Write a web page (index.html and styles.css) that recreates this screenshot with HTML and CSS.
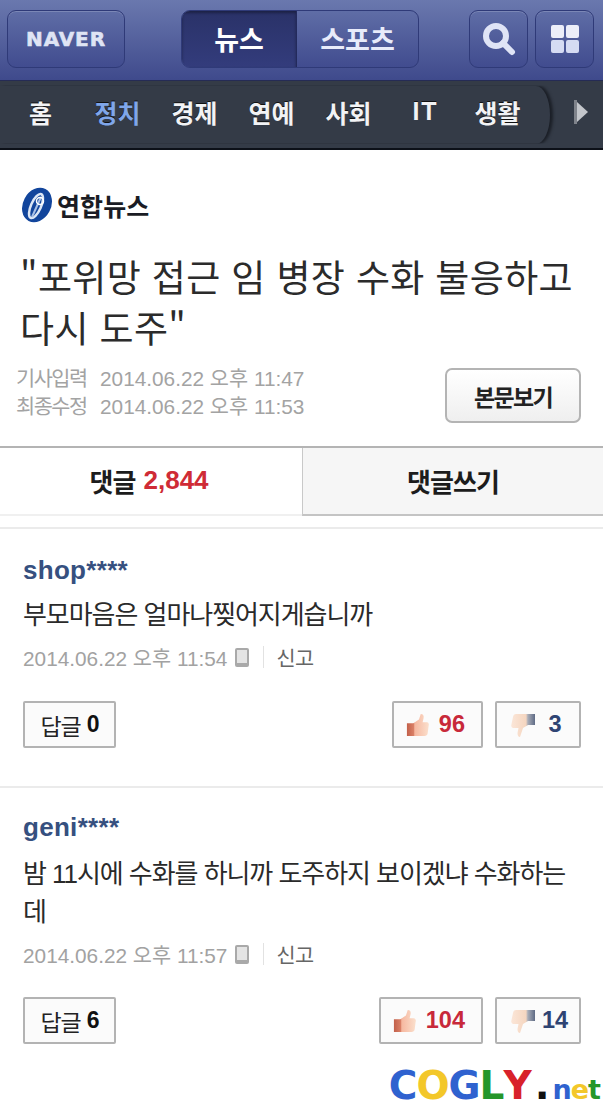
FILE: index.html
```html
<!DOCTYPE html>
<html lang="ko">
<head>
  <meta charset="UTF-8" />
  <title>연합뉴스 - 댓글</title>
  <link rel="stylesheet" href="styles.css">
  <meta name="viewport" content="width=device-width, initial-scale=1.0" />
</head>
<body>

  <header class="topbar">
    <a class="tbtn naver">NAVER</a>
    <div class="seg">
      <a class="seg-item on">뉴스</a>
      <a class="seg-item">스포츠</a>
    </div>
    <div class="tools">
      <a class="tbtn icon-btn">
        <svg width="36" height="36" viewBox="0 0 36 36">
          <circle cx="15" cy="15" r="10" fill="none" stroke="#dfe4f6" stroke-width="6"/>
          <path d="M22 22 L31 31" stroke="#dfe4f6" stroke-width="6" stroke-linecap="round"/>
        </svg>
      </a>
      <a class="tbtn icon-btn">
        <svg width="30" height="30" viewBox="0 0 30 30">
          <rect x="1" y="1" width="13" height="13" rx="2" fill="#eceef9"/>
          <rect x="16" y="1" width="13" height="13" rx="2" fill="#eceef9"/>
          <rect x="1" y="16" width="13" height="13" rx="2" fill="#d5dbf3"/>
          <rect x="16" y="16" width="13" height="13" rx="2" fill="#d5dbf3"/>
        </svg>
      </a>
    </div>
  </header>

  <nav class="menu">
    <div class="menu-list">
      <a>홈</a>
      <a class="active">정치</a>
      <a>경제</a>
      <a>연예</a>
      <a>사회</a>
      <a class="latin">IT</a>
      <a class="last">생활</a>
    </div>
    <div class="menu-more">
      <svg width="16" height="26" viewBox="0 0 16 26">
        <path d="M1 1 H4 V25 H1 Z" fill="#7f838b"/>
        <path d="M4 3 L15 13 L4 23 Z" fill="#c3c6cb"/>
      </svg>
    </div>
  </nav>

  <section class="article">
    <div class="press">
      <svg width="34" height="38" viewBox="0 0 34 38">
        <ellipse cx="17" cy="19" rx="14" ry="18" transform="rotate(28 17 19)" fill="#12459c"/>
        <ellipse cx="16" cy="20" rx="5" ry="13" transform="rotate(24 16 20)" fill="none" stroke="#dce6f5" stroke-width="2.500"/>
        <path d="M21 11 L12 31" stroke="#a9c1e6" stroke-width="2"/>
        <circle cx="20" cy="15" r="3.500" fill="none" stroke="#fff" stroke-width="1.500"/>
      </svg>
      <span class="press-name">연합뉴스</span>
    </div>
    <h1>"포위망 접근 임 병장 수화 불응하고 다시 도주"</h1>
    <div class="meta-row">
      <div class="dates">
        <p><span class="lbl">기사입력</span>2014.06.22 오후 11:47</p>
        <p><span class="lbl">최종수정</span>2014.06.22 오후 11:53</p>
      </div>
      <a class="body-btn">본문보기</a>
    </div>
  </section>

  <div class="tabs">
    <a class="tab on">댓글 <em>2,844</em></a>
    <a class="tab">댓글쓰기</a>
  </div>

  <section class="comment first">
    <div class="who">shop****</div>
    <p class="text">부모마음은 얼마나찢어지게습니까</p>
    <div class="info">
      <span>2014.06.22 오후 11:54</span>
      <svg class="phone" width="14" height="19" viewBox="0 0 14 19"><rect width="14" height="19" rx="2" fill="#a9a9a9"/><rect x="2" y="2" width="10" height="13" fill="#e4e4e4"/></svg>
      <i class="sep"></i>
      <a class="report">신고</a>
    </div>
    <div class="actions">
      <a class="btn reply">답글 <b>0</b></a>
      <div class="votes">
        <a class="btn vote up">
          <svg width="24" height="24" viewBox="0 0 26 26"><use href="#thumb"/></svg>
          <b>96</b>
        </a>
        <a class="btn vote down">
          <svg width="26" height="26" viewBox="0 0 26 26"><use href="#thumbdown"/></svg>
          <b>3</b>
        </a>
      </div>
    </div>
  </section>

  <section class="comment second">
    <div class="who">geni****</div>
    <p class="text">밤 11시에 수화를 하니까 도주하지 보이겠냐 수화하는 데</p>
    <div class="info">
      <span>2014.06.22 오후 11:57</span>
      <svg class="phone" width="14" height="19" viewBox="0 0 14 19"><rect width="14" height="19" rx="2" fill="#a9a9a9"/><rect x="2" y="2" width="10" height="13" fill="#e4e4e4"/></svg>
      <i class="sep"></i>
      <a class="report">신고</a>
    </div>
    <div class="actions">
      <a class="btn reply">답글 <b>6</b></a>
      <div class="votes">
        <a class="btn vote up">
          <svg width="24" height="24" viewBox="0 0 26 26"><use href="#thumb"/></svg>
          <b>104</b>
        </a>
        <a class="btn vote down">
          <svg width="26" height="26" viewBox="0 0 26 26"><use href="#thumbdown"/></svg>
          <b>14</b>
        </a>
      </div>
    </div>
  </section>

  <div class="watermark">
    <span class="c-blue">C</span><span class="c-yellow">O</span><span class="c-blue">G</span><span class="c-green">L</span><span class="c-red">Y</span><span class="c-dot">.</span><small class="c-blue">n</small><small class="c-yellow">e</small><small class="c-green">t</small>
  </div>

  <svg width="0" height="0" class="defs">
    <defs>
      <linearGradient id="skin" x1="0" x2="1" y1="0" y2="0">
        <stop offset="0" stop-color="#c2604a"/>
        <stop offset="0.3" stop-color="#d97f66"/>
        <stop offset="0.36" stop-color="#f6b8a0"/>
        <stop offset="1" stop-color="#fbe0cd"/>
      </linearGradient>
      <linearGradient id="skin2" x1="0" x2="1" y1="0" y2="0">
        <stop offset="0" stop-color="#fbe6d8"/>
        <stop offset="0.62" stop-color="#f5d6c0"/>
        <stop offset="0.7" stop-color="#a9adb8"/>
        <stop offset="1" stop-color="#5f6b85"/>
      </linearGradient>
      <symbol id="thumb" viewBox="0 0 26 26">
        <path d="M1 11 H8 L14 7 L16 1 Q20 1 19 6 L18 10 H23 Q25.500 11 24.500 14 L23.500 22 Q23 25 20 25 H1 Z" fill="url(#skin)"/>
      </symbol>
      <symbol id="thumbdown" viewBox="0 0 26 26">
        <path d="M25 2 V13 H18 L13 16 L10 25 Q7.500 25 7.500 21 L8.500 16 H3 Q0.500 15 1.500 12 L3 5 Q3.500 2 6 2 Z" fill="url(#skin2)"/>
      </symbol>
    </defs>
  </svg>

</body>
</html>
```

FILE: styles.css
```css
* {
  box-sizing: border-box;
}

html, body {
  height: 1108px;
  overflow: hidden;
}

body {
  margin: 0;
  background: #fff;
  color: #222;
  font-family: "Liberation Sans", "Noto Sans CJK KR", sans-serif;
  position: relative;
}

p, h1 {
  margin: 0;
}

/* top bar */
.topbar {
  height: 81px;
  padding: 10px 9px 0 7px;
  display: flex;
  align-items: flex-start;
  background: linear-gradient(#6a78ae, #3f4a8c);
  border-bottom: 1px solid #252b55;
}

.tbtn {
  display: flex;
  align-items: center;
  justify-content: center;
  height: 58px;
  border: 1px solid #2f3a78;
  border-radius: 9px;
  background: linear-gradient(#5f6da6, #414c8f);
  box-shadow: inset 0 1px 0 rgba(255,255,255,0.18);
}

.naver {
  width: 118px;
  color: #dfe4f4;
  font-weight: bold;
  font-size: 20px;
  font-family: "DejaVu Sans", sans-serif;
  letter-spacing: 0.9px;
  -webkit-text-stroke: 0.6px #dfe4f4;
}

.seg {
  width: 238px;
  height: 58px;
  margin-left: 56px;
  flex-shrink: 0;
  display: flex;
  border: 1px solid #2f3a78;
  border-radius: 9px;
  overflow: hidden;
  background: linear-gradient(#5f6da6, #414c8f);
}

.seg-item {
  flex: 1;
  display: flex;
  align-items: center;
  justify-content: center;
  color: #e8ebfa;
  font-size: 27px;
  font-weight: bold;
  padding-bottom: 2px;
}

.seg-item.on {
  flex: 0 0 115px;
  color: #fff;
  background: linear-gradient(#2a3268, #333c7c);
  box-shadow: inset 0 2px 3px rgba(0,0,0,0.35);
  border-right: 1px solid #232a5c;
}

.tools {
  margin-left: auto;
  display: flex;
  gap: 7px;
}

.icon-btn {
  width: 59px;
}

/* category menu */
.menu {
  height: 69px;
  display: flex;
  align-items: center;
  background: #343b47;
  border-bottom: 2px solid #0c1018;
}

.menu-list {
  width: 550px;
  height: 58px;
  padding-left: 2px;
  display: flex;
  align-items: center;
  border-radius: 0 14px 14px 0 / 0 29px 29px 0;
  box-shadow: 3px 0 3px #1b1f27;
  clip-path: inset(0 -10px 0 0);
  background: #343b47;
}

.menu-list a {
  width: 77px;
  padding-bottom: 6px;
  text-align: center;
  color: #f2f3f5;
  font-size: 25px;
  font-weight: bold;
  text-shadow: 0 -1px 0 #111;
  white-space: nowrap;
}

.menu-list a.active {
  color: #7fa6ea;
}

.menu-list a.latin {
  letter-spacing: 2px;
}

.menu-list a.last {
  margin-left: -5px;
}

.menu-more {
  flex: 1;
  display: flex;
  justify-content: center;
  padding-bottom: 5px;
  padding-left: 8px;
}

/* article head */
.article {
  height: 296px;
  padding: 36px 22px 0 22px;
}

.press {
  height: 38px;
  display: flex;
  align-items: center;
  gap: 3px;
  margin-left: -2px;
}

.press-name {
  font-size: 25px;
  font-weight: bold;
  color: #1a1c24;
  letter-spacing: 0.1px;
}

h1 {
  margin: 27px 3px 0 -2px;
  font-size: 37px;
  font-weight: normal;
  line-height: 51px;
  color: #2b2b2b;
  font-family: "Noto Sans CJK KR", sans-serif;
  letter-spacing: 0.35px;
}

.meta-row {
  margin-top: 9px;
  display: flex;
  justify-content: space-between;
  align-items: flex-start;
  margin-left: -6px;
}

.dates {
  padding-top: 3px;
  color: #a3a3a3;
  font-size: 20.800px;
  line-height: 28px;
}

.lbl {
  display: inline-block;
  width: 84px;
  letter-spacing: -1.5px;
}

.body-btn {
  width: 136px;
  height: 55px;
  margin-top: 6px;
  display: flex;
  align-items: center;
  justify-content: center;
  color: #222;
  font-size: 23px;
  font-weight: bold;
  letter-spacing: -1.700px;
  background: linear-gradient(#fff, #efefef);
  border: 2px solid #b4b4b4;
  border-radius: 7px;
}

/* tabs */
.tabs {
  height: 70px;
  display: flex;
  border-top: 2px solid #b4b4b4;
}

.tab {
  display: flex;
  align-items: center;
  justify-content: center;
  gap: 8px;
  padding-bottom: 2px;
  font-size: 26px;
  font-weight: bold;
  color: #1c1c1c;
  letter-spacing: -0.9px;
}

.tab.on {
  width: 302px;
  padding-right: 4px;
  border-bottom: 2px solid #f0f0f0;
}

.tab:not(.on) {
  flex: 1;
  background: #f6f6f6;
  border-left: 1px solid #c9c9c9;
  border-bottom: 2px solid #c4c4c4;
}

.tab em {
  font-style: normal;
  color: #cf2b36;
  letter-spacing: 0;
}

/* comments */
.comment {
  padding: 0 23px;
  border-bottom: 2px solid #ebebeb;
}

.comment.first {
  height: 261px;
  margin-top: 11px;
  padding-top: 27px;
  border-top: 2px solid #ebebeb;
}

.who {
  color: #36507f;
  font-size: 26px;
  font-weight: bold;
  line-height: 28px;
  letter-spacing: 0.3px;
}

.text {
  margin-top: 12px;
  font-size: 26px;
  line-height: 38px;
  color: #2a2a2a;
  letter-spacing: -1.050px;
}

.info {
  margin-top: 8px;
  height: 30px;
  display: flex;
  align-items: center;
  color: #a2a2a2;
  font-size: 20.800px;
}

.phone {
  margin-left: 8px;
}

.sep {
  width: 1px;
  height: 22px;
  margin: 0 12px 0 14px;
  background: #e2e2e2;
}

.report {
  color: #666;
  letter-spacing: -0.5px;
}

.actions {
  margin-top: 29px;
  display: flex;
  justify-content: space-between;
}

.btn {
  height: 47px;
  display: flex;
  align-items: center;
  background: #fbfbfb;
  border: 2px solid #b3b3b3;
  border-radius: 2px;
}

.reply {
  width: 93px;
  gap: 6px;
  justify-content: center;
  font-size: 23px;
  color: #222;
  letter-spacing: -1px;
}

.reply b {
  color: #111;
}

.votes {
  display: flex;
  gap: 12px;
  margin-right: -1px;
}

.vote {
  font-size: 23.500px;
}

.up {
  gap: 9px;
  padding: 0 16px 0 12px;
  color: #c8293a;
}

.down {
  width: 86px;
  gap: 4px;
  padding-left: 13px;
  color: #2f4473;
}

.down b {
  width: 30px;
  text-align: center;
}

/* 2nd comment has two text lines */
.comment.second {
  height: 320px;
  padding-top: 25px;
  border-bottom: 0;
}

.second .text {
  margin-top: 14px;
}

.second .actions {
  margin-top: 28px;
}

.defs {
  position: absolute;
}

/* site stamp over the picture */
.watermark {
  position: absolute;
  right: 3px;
  bottom: -2px;
  display: flex;
  align-items: baseline;
  font-family: "DejaVu Sans", sans-serif;
  font-weight: bold;
  font-size: 39px;
  line-height: 40px;
  letter-spacing: -1px;
}

.watermark small {
  font-size: 27px;
  letter-spacing: -1px;
}

.c-blue { color: #2f62cf; }
.c-yellow { color: #f3c72a; }
.c-green { color: #25962a; }
.c-red { color: #d8222a; }
.c-dot { color: #111; margin: 0 4px; }
```
